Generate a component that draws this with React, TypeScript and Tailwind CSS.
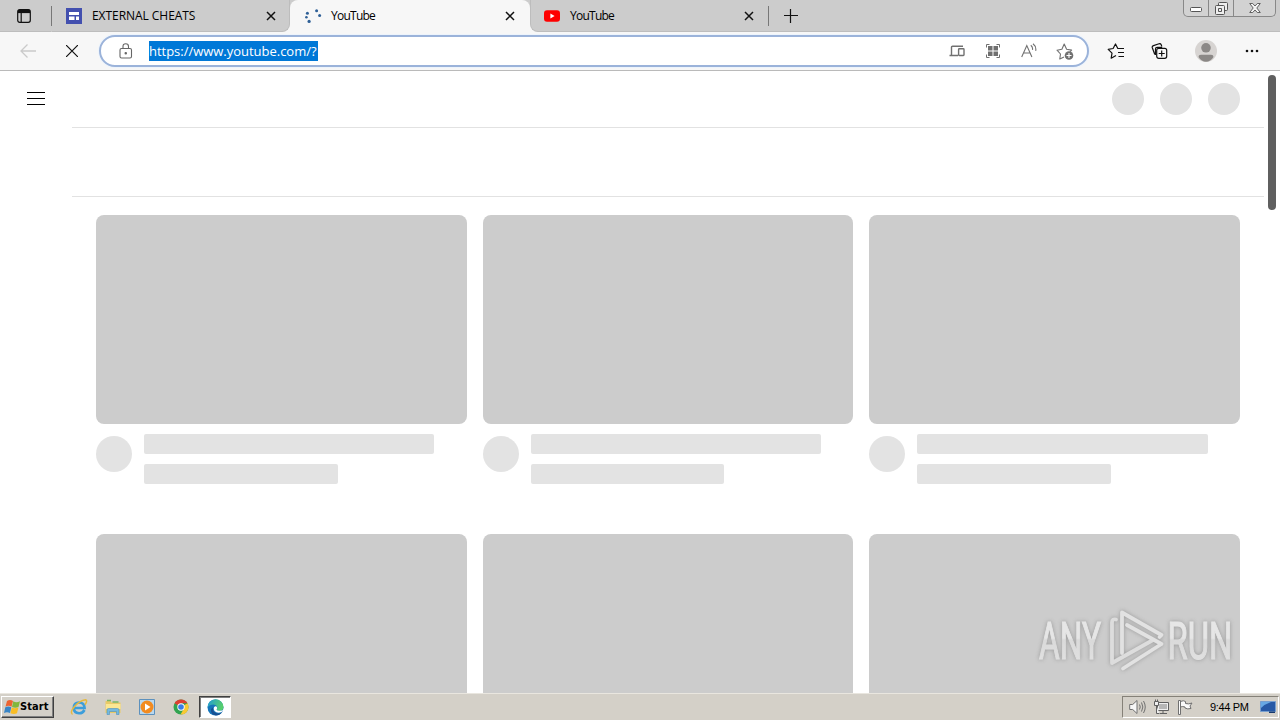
import React from "react";

const uiFont = 'font-["Open_Sans","Noto_Sans",sans-serif]';

function CloseIcon({ className = "" }: { className?: string }) {
  return (
    <svg width="10" height="10" viewBox="0 0 10 10" className={className} fill="none" stroke="#111" strokeWidth="1.5">
      <path d="M1 1l8 8M9 1L1 9" />
    </svg>
  );
}

type TabProps = {
  title: string;
  icon: React.ReactNode;
  active?: boolean;
  titleClass: string;
  className: string;
};

function Tab({ title, icon, active, titleClass, className }: TabProps) {
  return (
    <div className={`flex h-8 items-center ${active ? "rounded-t-lg bg-[#f7f7f7]" : "bg-[#cccccc]"} ${className}`}>
      <span className="flex w-4 shrink-0 justify-center">{icon}</span>
      <span className={`ml-[10px] flex-1 whitespace-nowrap text-[12px] leading-4 text-black ${titleClass}`}>{title}</span>
      <CloseIcon />
    </div>
  );
}

function SitesIcon() {
  return (
    <svg width="16" height="16" viewBox="0 0 16 16">
      <path fill="#4350af" d="M0 0h16v16H0z" />
      <path fill="#fff" d="M3 4h10v3H3zM3 8.500h5.500v3.500H3zM10 8.500h3v3.500h-3z" />
    </svg>
  );
}

function SpinnerDots() {
  return (
    <svg width="18" height="16" viewBox="0 0 18 16" className="shrink-0" fill="#2f6097">
      <circle cx="3.4" cy="5.3" r="1.5" />
      <circle cx="2.4" cy="9.2" r="1.3" />
      <circle cx="5.1" cy="13.4" r="1.6" />
      <circle cx="12.6" cy="2.7" r="1.5" />
      <circle cx="15.6" cy="7.4" r="1.5" />
    </svg>
  );
}

function YouTubeIcon() {
  return (
    <svg width="16" height="12" viewBox="0 0 16 12">
      <rect width="16" height="11.5" y=".2" rx="3" fill="#fe0000" />
      <path d="M6.4 3.4v5l4.2-2.5z" fill="#fff" />
    </svg>
  );
}

function TabStrip() {
  return (
    <div className="flex h-8 bg-[#cccccc]">
      <div className="flex w-[51px] items-center border-b border-[#bdbdbd] pl-[17px]">
        <svg width="14" height="14" viewBox="0 0 14 14" fill="none" stroke="#111" strokeWidth="1.2">
          <rect x=".7" y=".7" width="12.6" height="12.6" rx="2" />
          <path d="M1 2.5h12" strokeWidth="3.2" />
          <path d="M4.2 4v9" />
        </svg>
      </div>
      <div className="mt-1.5 h-5 w-px bg-[#777]" />
      <div className="flex bg-[#f7f7f7]">
        <Tab
          title="EXTERNAL CHEATS"
          icon={<SitesIcon />}
          titleClass="tracking-[-0.05px]"
          className="w-[238px] rounded-br-lg border-b border-r border-[#bdbdbd] pl-[14px] pr-[13px]"
        />
        <Tab
          title="YouTube"
          icon={<SpinnerDots />}
          active
          titleClass="tracking-[-0.75px]"
          className="w-[240px] bg-[#f7f7f7] pl-[15px] pr-[15px] shadow-[0_-8px_0_0_#ccc]"
        />
        <Tab
          title="YouTube"
          icon={<YouTubeIcon />}
          titleClass="tracking-[-0.75px]"
          className="w-[238px] rounded-bl-lg border-b border-l border-[#bdbdbd] pl-[13px] pr-[14px]"
        />
      </div>
      <div className="flex flex-1 items-start border-b border-[#bdbdbd]">
        <div className="mt-1.5 h-5 w-px bg-[#777]" />
        <svg width="14" height="14" viewBox="0 0 14 14" className="ml-[15px] mt-[9px]" stroke="#111" strokeWidth="1.2">
          <path d="M6.500 0v14M0 6.500h14" />
        </svg>
        <div className="ml-auto mr-[4px] flex h-[17px] w-[93px] overflow-hidden rounded-b-[5px] border border-t-0 border-[#888] bg-[#d2d2d2]">
          <div className="flex w-[25px] items-center justify-center border-r border-[#888] pt-[3px]">
            <svg width="12" height="5" viewBox="0 0 12 5"><rect x=".5" y=".5" width="11" height="4" rx="1" fill="#fff" stroke="#555" /></svg>
          </div>
          <div className="flex w-[25px] items-center justify-center border-r border-[#888]">
            <svg width="13" height="13" viewBox="0 0 13 13" fill="#eee" stroke="#555">
              <rect x="3.5" y=".5" width="9" height="8" rx="1" />
              <rect x=".5" y="3.5" width="9" height="9" rx="1" />
              <path d="M3.5 6.5h3v3h-3z" />
            </svg>
          </div>
          <div className="flex flex-1 items-center justify-center">
            <svg width="12" height="10" viewBox="0 0 12 10" fill="#f4f4f4" stroke="#555" strokeWidth=".9">
              <path d="M.7.5h3l2.3 2.5L8.300.5h3L7.800 5l3.500 4.500h-3L6 7 3.700 9.500h-3L4.200 5z" />
            </svg>
          </div>
        </div>
      </div>
    </div>
  );
}

function AddressIcons() {
  return (
    <div className="ml-auto flex items-center text-[#707070]">
      <svg width="16" height="12" viewBox="0 0 16 12" fill="none" stroke="currentColor" strokeWidth="1.4">
        <path d="M9 10.500H.5M2.500 10V2.200q0-1 1-1H14M10.300 3.800h4q.7 0 .7.7v5.300q0 .7-.7.7h-4q-.7 0-.7-.7V4.500q0-.7.7-.7z" />
      </svg>
      <svg width="14" height="14" viewBox="0 0 14 14" className="ml-[21px]" fill="none" stroke="currentColor">
        <path d="M.5 3.500v-3h3M10.500.5h3v3M13.500 10.500v3h-3M3.500 13.500h-3v-3" />
        <path d="M2 2h4.500v4.500H2zM7.500 2H12v4.500H7.500zM2 7.500h4.500V12H2zM7.500 7.500H12V12H7.500z" fill="currentColor" stroke="none" />
      </svg>
      <svg width="16" height="16" viewBox="0 0 16 16" className="ml-[21px]" fill="none" stroke="currentColor" strokeWidth="1.1">
        <path d="M.7 14L5.800 2.500 10.900 14M2.500 10h6.600M9.800 2.300q2.200 1.700 1.700 4.500M12 .8q3.500 2.700 2.700 7" />
      </svg>
      <svg width="18" height="17" viewBox="0 0 18 17" className="ml-[19px]" fill="none" stroke="currentColor" strokeWidth="1.1" strokeLinejoin="round">
        <path d="M8 14l-4.200 2 .7-5L1 7.200l4.900-.9L8.200 1l2.400 5.200 5 .9-1.500 1.500" />
        <circle cx="13" cy="12.500" r="4.300" fill="currentColor" stroke="none" />
        <path d="M13 10v5M10.500 12.500h5" stroke="#fff" />
      </svg>
    </div>
  );
}

function Toolbar() {
  return (
    <div className="flex h-[39px] items-center border-b border-[#bababa] bg-[#f7f7f7]">
      <svg width="16" height="14" viewBox="0 0 16 14" className="ml-5" fill="none" stroke="#cacaca" strokeWidth="1.3">
        <path d="M16 7H1M7.500.5L1 7l6.500 6.500" />
      </svg>
      <svg width="12" height="12" viewBox="0 0 12 12" className="ml-[30px]" stroke="#111" strokeWidth="1.2">
        <path d="M0 0l12 12M12 0L0 12" />
      </svg>
      <div className="ml-[21px] flex h-8 w-[990px] items-center rounded-full border-2 border-[#9bb3da] bg-white pl-[18px] pr-[13px] shadow-[0_0_0_1px_#edf4fc]">
        <svg width="14" height="16" viewBox="0 0 14 16" fill="none" stroke="#666" strokeWidth="1.1">
          <rect x="1" y="5.500" width="11.500" height="9.500" rx="1.500" />
          <path d="M4 5.500V3.500q0-2.700 2.750-2.700T9.500 3.500v2" />
          <circle cx="6.750" cy="10.300" r=".7" fill="#666" />
        </svg>
        <span className="ml-[16px] h-5 w-[169px] whitespace-nowrap bg-[#0078d7] text-[13px] leading-5 tracking-[-0.02px] text-white">
          https://www.youtube.com/?
        </span>
        <AddressIcons />
      </div>
      <svg width="18" height="16" viewBox="0 0 18 16" className="ml-[18px]" fill="none" stroke="#111" strokeWidth="1.200" strokeLinejoin="round">
        <path d="M9 12.500l-4.800 2.700.8-5.100L1.200 6.300l4.900-.8L8.500 1l2.300 4.500H17M11 9.500h6M11.500 13.500H17" />
      </svg>
      <svg width="17" height="16" viewBox="0 0 17 16" className="ml-[26px]" fill="none" stroke="#111" strokeWidth="1.200">
        <path d="M3.800 11.500L1.300 4.800Q.8 3.200 2.500 2.600L8 .8q1.600-.4 2.200 1l.6 1.600M4.500 12V6q0-1.700 1.700-1.700h5" />
        <rect x="5.700" y="5.300" width="10" height="10" rx="2" fill="#f7f7f7" />
        <path d="M10.700 7.500v6M7.700 10.500h6" />
      </svg>
      <svg width="22" height="22" viewBox="0 0 22 22" className="ml-[27px]">
        <circle cx="11" cy="11" r="11" fill="#d7d4d2" />
        <circle cx="11" cy="7.800" r="4.800" fill="#8b8886" />
        <path d="M3.500 17q0-2.300 2.400-2.300h10.200q2.400 0 2.400 2.300-3 4.800-7.500 4.800T3.500 17z" fill="#8b8886" />
      </svg>
      <svg width="14" height="4" viewBox="0 0 14 4" className="ml-[28px]" fill="#111">
        <circle cx="2" cy="2" r="1.300" />
        <circle cx="7" cy="2" r="1.300" />
        <circle cx="12" cy="2" r="1.300" />
      </svg>
    </div>
  );
}

function VideoCard() {
  return (
    <div className="h-[319px]">
      <div className="h-[209px] rounded-lg bg-[#cccccc]" />
      <div className="mt-[10px] flex">
        <div className="mt-0.5 size-9 shrink-0 rounded-full bg-[#e3e3e3]" />
        <div className="ml-3 flex-1">
          <div className="h-5 w-[90%] rounded-[2px] bg-[#e3e3e3]" />
          <div className="mt-[10px] h-5 w-[60%] rounded-[2px] bg-[#e3e3e3]" />
        </div>
      </div>
    </div>
  );
}

function Watermark() {
  return (
    <svg
      width="210"
      height="80"
      viewBox="0 0 210 80"
      className="absolute left-[1036px] top-[535px] overflow-visible drop-shadow-[0_0_2px_rgba(90,90,90,0.45)]"
    >
      <defs>
        <linearGradient id="fade" gradientUnits="userSpaceOnUse" x1="0" y1="-38" x2="0" y2="0">
          <stop offset="0.45" stopColor="#e6e6e6" />
          <stop offset="0.5" stopColor="#dadada" />
          <stop offset="1" stopColor="#e0e0e0" />
        </linearGradient>
      </defs>
      <g fill="url(#fade)" stroke="url(#fade)" strokeWidth="1.200" fontFamily="Roboto, sans-serif" fontSize="52">
        <text transform="translate(3 53) scale(.61 1)">ANY</text>
        <text transform="translate(131.500 53) scale(.63 1)">RUN</text>
      </g>
      <g fill="none" stroke="#e2e2e2" strokeWidth="3.800" strokeLinejoin="round" strokeLinecap="round">
        <path d="M86 47V6.500L125.500 29l-2 2" />
        <path d="M80 13.500q-4-1-4 3V57L117 34" stroke="#dddddd" />
        <path d="M91 19l34.500 19L87 62.500" />
      </g>
    </svg>
  );
}

function Page() {
  return (
    <div className="relative flex h-[622px] overflow-hidden bg-white">
      <div className="flex w-[72px] justify-center pt-[21px]">
        <svg width="18" height="14" viewBox="0 0 18 14" fill="#000">
          <path d="M0 0h18v1H0zM0 6h18v1H0zM0 12h18v1H0z" />
        </svg>
      </div>
      <div className="w-[1192px]">
        <div className="flex h-[57px] items-start justify-end gap-4 border-b border-[#e2e2e2] pr-6 pt-3">
          <div className="size-8 rounded-full bg-[#e3e3e3]" />
          <div className="size-8 rounded-full bg-[#e3e3e3]" />
          <div className="size-8 rounded-full bg-[#e3e3e3]" />
        </div>
        <div className="h-[69px] border-b border-[#e2e2e2]" />
        <div className="grid grid-cols-3 gap-x-4 px-6 pt-[18px]">
          {Array.from({ length: 6 }, (_, i) => (
            <VideoCard key={i} />
          ))}
        </div>
      </div>
      <div className="flex w-4 justify-center pt-1">
        <div className="h-[135px] w-2 rounded-full bg-[#5f5f5f]" />
      </div>
      <Watermark />
    </div>
  );
}

function WindowsFlag() {
  return (
    <svg width="17" height="16" viewBox="0 0 17 16">
      <path d="M3 2q3-2 6 0L7.500 7.700q-3-1.700-6 0z" fill="#ed6431" />
      <path d="M9.300 2.300q3 1.700 6.700 0L14.500 8q-3 1.500-6.500 0z" fill="#82b73c" />
      <path d="M1.300 8.300q3-1.700 6 0L6 14q-3-1.700-6 0z" fill="#3985c6" />
      <path d="M7.800 8.500q3 1.500 6.600 0L13 14.200q-3 1.500-6.600 0z" fill="#f9bd24" />
    </svg>
  );
}

function ExplorerIcon() {
  return (
    <svg width="18" height="18" viewBox="0 0 18 18" fill="none">
      <path d="M14.500 12Q12.500 15.500 9 15.300 3.800 15 3.800 9.800T9 4.500q5.400 0 5.600 5.500H4.500" stroke="#3c9edb" strokeWidth="2.600" />
      <path d="M2.500 16.500Q-.5 14.500 4.500 8.500T15.500 1.700q2.500.7-.5 5" stroke="#e6b93e" strokeWidth="1.500" />
    </svg>
  );
}

function FolderIcon() {
  return (
    <svg width="18" height="18" viewBox="0 0 18 18">
      <path d="M1.500 3h5l1 1.500h9V15h-15z" fill="#e9ca68" />
      <path d="M3 2.500h4M8.500 4h6" stroke="#79b666" strokeWidth="1.500" />
      <path d="M2 6h14.500v5H2z" fill="#fbe793" />
      <path d="M3 16.500V12q0-1.500 1.500-1.500h9Q15 10.500 15 12v4.500h-2.500v-3h-7v3z" fill="#75b9df" stroke="#4b91bd" strokeWidth=".6" />
    </svg>
  );
}

function MediaIcon() {
  return (
    <svg width="18" height="18" viewBox="0 0 18 18">
      <path d="M1.500 1.500h15v15h-15z" fill="#b9d8ef" stroke="#5d91bd" />
      <circle cx="9" cy="9" r="6.500" fill="#f28b20" />
      <path d="M7 5.500v7L12.500 9z" fill="#fff" />
    </svg>
  );
}

function ChromeIcon() {
  return (
    <svg width="16" height="16" viewBox="0 0 16 16">
      <circle cx="8" cy="8" r="7.500" fill="#31a350" />
      <path d="M8 8L1.500 4.250A7.500 7.500 0 0 1 14.500 4.250H8z" fill="#dd3f32" />
      <path d="M8 8l6.500-3.750A7.500 7.500 0 0 1 7.500 15.500L11 9.500z" fill="#f9c933" />
      <circle cx="8" cy="8" r="3.700" fill="#fff" />
      <circle cx="8" cy="8" r="2.800" fill="#397de5" />
    </svg>
  );
}

function EdgeIcon() {
  return (
    <svg width="17" height="17" viewBox="0 0 17 17">
      <defs>
        <linearGradient id="edge" x1="0" y1="0" x2="1" y2=".3">
          <stop stopColor="#1f9bd9" />
          <stop offset="1" stopColor="#57cf6c" />
        </linearGradient>
      </defs>
      <circle cx="8.500" cy="8.500" r="8" fill="#1575ba" />
      <path d="M.5 8.500a8 8 0 0 1 16-.5q0 3.700-4 3.700-2.800 0-3-1.200 1-1 .7-2.500Q9.500 5.500 6.500 5.500 2.500 5.500.5 8.500z" fill="url(#edge)" />
      <path d="M6 8.500q-.7 5 4.500 6 2.500.3 4.800-1.500-2.500 3.500-6.300 3.500Q3.500 15.500 4 10.500q.5-1.500 2-2z" fill="#174f91" />
      <path d="M7.800 7.500q-2 1.500-.3 4.500 3 3 7.500.7l1.800-2.500q-1.500 1.500-4.300 1.500-2.800 0-3-1.200 1-1 .5-2.200-.7-1.300-2.200-.8z" fill="#fff" />
    </svg>
  );
}

function Tray() {
  return (
    <div className="ml-auto mr-px flex h-[22px] w-[157px] items-center border border-b-white border-l-[#858178] border-r-white border-t-[#858178] pl-[6px] font-['Liberation_Sans',Arial,sans-serif]">
      <svg width="17" height="16" viewBox="0 0 17 16" fill="#f7f7f7" stroke="#707070">
        <path d="M.7 5.500h3L8 1.500v13l-4.300-4h-3z" />
        <path d="M10.500 5.500q1.500 2.500 0 5M12.500 3.500q2.700 4.500 0 9M14.500 2q3.500 6 0 12" fill="none" />
      </svg>
      <svg width="17" height="16" viewBox="0 0 17 16" className="ml-[7px]" fill="#efefef" stroke="#606060">
        <path d="M4.500 3.500h11v8h-11z" />
        <path d="M6 5h8v5H6z" fill="#b6b6b6" stroke="none" />
        <path d="M7 14.500h7M10 12v2M1.500 2.500h4v4h-4zM2.500.5v2M4.500.5v2M3.500 6.500v8h3" />
      </svg>
      <svg width="16" height="16" viewBox="0 0 16 16" className="ml-[7px]" fill="#fafafa" stroke="#707070">
        <path d="M1.500 1.500h2v14h-2zM3.500 2.500q3-1.500 5 0v2q3 1 6.500-.5l-2 3 1 2.500q-3.500 1-6-.5v-1q-2.500-1-4.500 0z" />
      </svg>
      <span className="ml-[17px] w-[40px] whitespace-nowrap text-[11px] tracking-[-0.35px] text-black">9:44 PM</span>
      <svg width="16" height="13" viewBox="0 0 16 13" className="ml-[10px]">
        <path d="M.5.5h15v10H.500z" fill="#2759a6" stroke="#779fcf" />
        <path d="M1 7Q5 3 11 1H1z" fill="#67a8e4" />
        <path d="M9 10.500h6V12H9z" fill="#17396e" />
      </svg>
    </div>
  );
}

function Taskbar() {
  return (
    <div className="flex h-[27px] items-center border-t border-[#e9e6df] bg-[#d4d0c8]">
      <div className="ml-px flex h-[22px] w-[53px] items-center border border-b-[#404040] border-l-white border-r-[#404040] border-t-white pl-[2px] shadow-[inset_-1px_-1px_0_#808080]">
        <WindowsFlag />
        <span className="-ml-px font-['DejaVu_Sans_Condensed','DejaVu_Sans',sans-serif] text-[11px] font-bold tracking-[0.1px] text-black">Start</span>
      </div>
      <div className="ml-[16px] flex gap-4">
        <ExplorerIcon />
        <FolderIcon />
        <MediaIcon />
      </div>
      <div className="ml-[17px]"><ChromeIcon /></div>
      <div className="ml-[10px] flex h-[22px] w-[32px] items-center justify-center border border-b-white border-l-[#404040] border-r-white border-t-[#404040] bg-white shadow-[inset_1px_1px_0_#808080]">
        <EdgeIcon />
      </div>
      <Tray />
    </div>
  );
}

export default function App() {
  return (
    <div className={`h-[720px] w-[1280px] overflow-hidden bg-white ${uiFont}`}>
      <TabStrip />
      <Toolbar />
      <Page />
      <Taskbar />
    </div>
  );
}
